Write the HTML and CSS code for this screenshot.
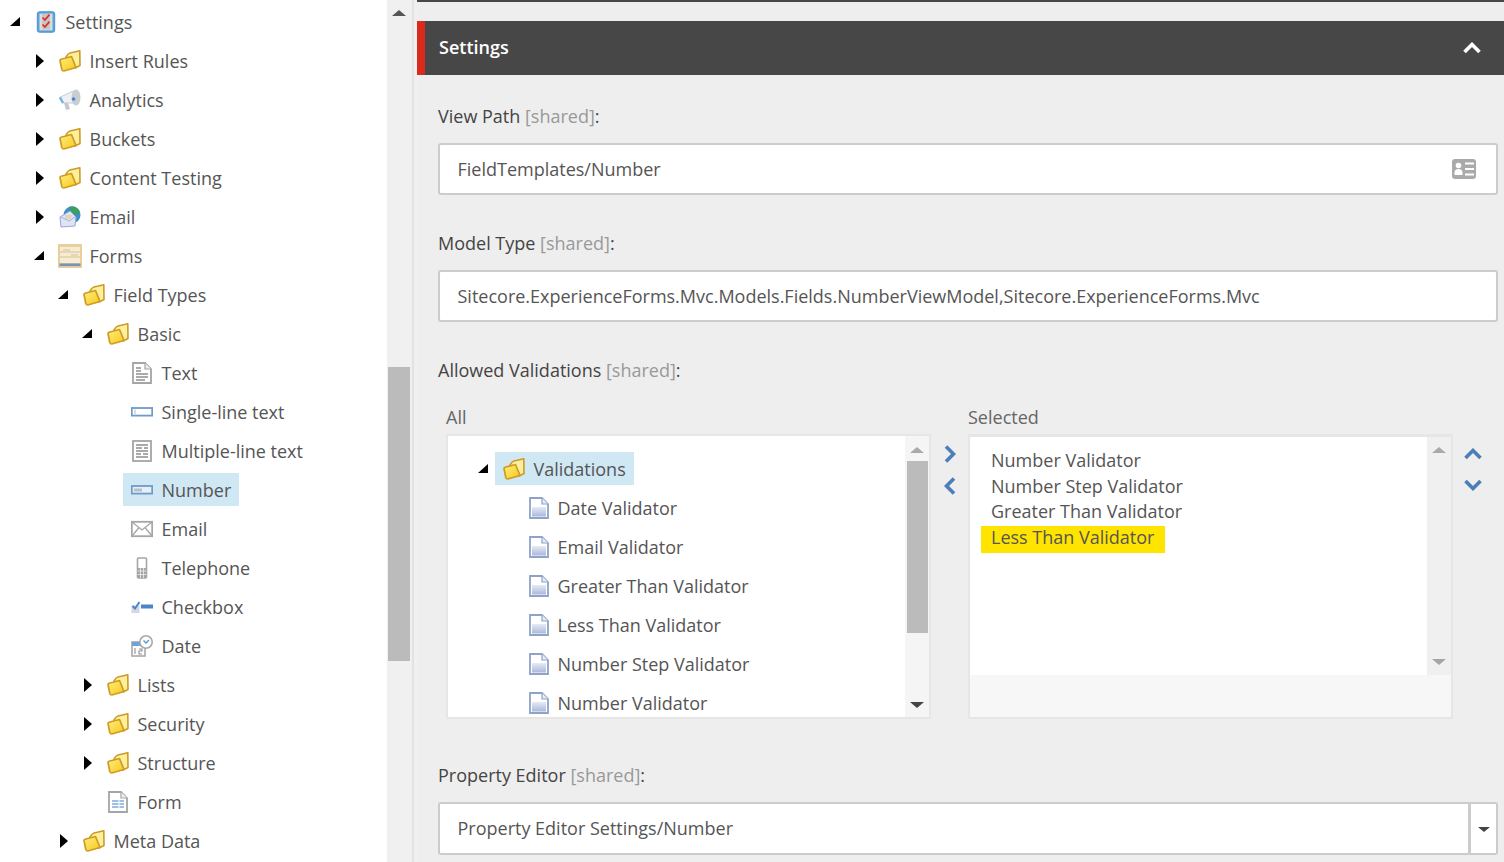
FILE: index.html
```html
<!DOCTYPE html>
<html lang="en">
<head>
<meta charset="utf-8">
<title>Settings</title>
<link rel="stylesheet" href="styles.css">
</head>
<body>
<svg class="defs" aria-hidden="true">
  <defs>
    <linearGradient id="fy" x1="0" y1="0" x2="1" y2="1"><stop offset="0" stop-color="#ffee80"/><stop offset="1" stop-color="#f6c81a"/></linearGradient>
    <linearGradient id="db" x1="0" y1="0" x2="0" y2="1"><stop offset="0" stop-color="#e6ebf5"/><stop offset="1" stop-color="#aab8dc"/></linearGradient>
    <symbol id="i-folder" viewBox="0 0 22 22">
      <path d="M7 7 Q9 3.5 11 3 L20.8 .8 L21 15.5 L16 18 Z" fill="#ffef9c" stroke="#cb9b28" stroke-width="1.6" stroke-linejoin="round"/>
      <path d="M1 10.5 Q1 9.6 2 9.3 L12.5 6.5 L17 17.5 L4.8 21 Q3.2 21 2.8 19.5 Z" fill="url(#fy)" stroke="#cf9c22" stroke-width="1.7" stroke-linejoin="round"/>
    </symbol>
    <symbol id="i-settings" viewBox="0 0 19 22">
      <rect x=".8" y=".8" width="17.4" height="20.4" rx="2" fill="#5aa3dc" stroke="#4b93d0" stroke-width="1"/>
      <rect x="3" y="2.6" width="13" height="16.8" fill="#dcdcdc"/>
      <rect x="5.5" y="3" width="8" height="15.5" fill="#c9c5c5"/>
      <path d="M6 6.5 L8.4 9 L13 3.6 M6 13.5 L8.4 16 L13 10.6" fill="none" stroke="#d5332a" stroke-width="1.8"/>
    </symbol>
    <symbol id="i-analytics" viewBox="0 0 22 22">
      <path d="M.5 8.5 L14 2 L17 14 L3.5 14 Z" fill="#eef0f3" stroke="#c5cbd3"/>
      <path d="M5 14 L7 21 L11 20 L9 14 Z" fill="#c2c7cd"/>
      <ellipse cx="17" cy="8.5" rx="4.5" ry="8" fill="#c9cdd2"/>
      <circle cx="14.5" cy="10" r="1.8" fill="#3f86d0"/>
      <path d="M1 8.5 L4 14" stroke="#6fb1e8" stroke-width="2.4"/>
    </symbol>
    <symbol id="i-emailglobe" viewBox="0 0 22 22">
      <circle cx="13" cy="9" r="8.5" fill="#3d8fc9"/>
      <path d="M10 .8 A8.5 8.5 0 0 1 21 6 L17 9 L12 5 Z" fill="#3aa05a"/>
      <path d="M1 11 L11 5 L17 11 L16 20 L2 21 Z" fill="#dfe4f5" stroke="#9aa6d8"/>
      <path d="M2 11 L10 15 L16 11" fill="none" stroke="#a8b2dc"/>
      <path d="M6 10 H13 M6.5 12 H12" stroke="#e3c777"/>
    </symbol>
    <symbol id="i-forms" viewBox="0 0 24 24">
      <rect width="24" height="24" fill="#e7cf9f"/>
      <rect x="2" y="3" width="20" height="16" fill="#f6ecd3"/>
      <path d="M2 8 H22 M2 13 H22 M5 6 H12 M13 11 H20" stroke="#d6c08f" stroke-width="1.2"/>
      <rect x="1.5" y="19.5" width="21" height="2.6" fill="#7793b5"/>
    </symbol>
    <symbol id="i-text" viewBox="0 0 20 22">
      <path d="M1 1 H13 L19 7 V21 H1 Z" fill="#fff" stroke="#a5a5a5" stroke-width="1.8"/>
      <path d="M13 1 V7 H19" fill="#eee" stroke="#a5a5a5" stroke-width="1.2"/>
      <path d="M4 6 H9 M4 9 H9 M4 12 H16 M4 15 H16 M4 18 H13" stroke="#8f8f8f" stroke-width="1.3"/>
    </symbol>
    <symbol id="i-single" viewBox="0 0 22 10">
      <rect x=".8" y="1" width="20.4" height="7.6" fill="#fff" stroke="#6f9bcb" stroke-width="1.8"/>
      <path d="M4 2.5 V7" stroke="#c6c6c6" stroke-width="1.2"/>
    </symbol>
    <symbol id="i-multi" viewBox="0 0 20 22">
      <rect x="1" y="1" width="18" height="20" fill="#fff" stroke="#a5a5a5" stroke-width="1.8"/>
      <path d="M4 5 H16 M4 8 H10 M12 8 H16 M4 11 H16 M4 14 H9 M11 14 H16 M4 17 H16" stroke="#8f8f8f" stroke-width="1.4"/>
    </symbol>
    <symbol id="i-number" viewBox="0 0 22 10">
      <rect x=".8" y="1" width="20.4" height="7.6" fill="#e7f0f8" stroke="#6f9bcb" stroke-width="1.8"/>
      <path d="M4 3.5 V6.5 M6 3.5 V6.5 M8 3.5 V6.5 M10 3.5 V6.5" stroke="#8e9aa8" stroke-width="1.1"/>
    </symbol>
    <symbol id="i-mail" viewBox="0 0 22 16">
      <rect x=".8" y=".8" width="20.4" height="14.4" fill="#fff" stroke="#a5a5a5" stroke-width="1.8"/>
      <path d="M1 1 L11 9 L21 1 M1 15 L8 6.5 M21 15 L14 6.5" fill="none" stroke="#a5a5a5" stroke-width="1.3"/>
    </symbol>
    <symbol id="i-phone" viewBox="0 0 12 22">
      <rect x="1.5" y="1" width="9" height="20" rx="1" fill="#fff" stroke="#a5a5a5" stroke-width="1.6"/>
      <rect x="1.5" y="11" width="9" height="10" fill="#a5a5a5"/>
      <path d="M4.5 11 V21 M7.5 11 V21 M1.5 14 H10.5 M1.5 17.5 H10.5" stroke="#eee" stroke-width=".8"/>
    </symbol>
    <symbol id="i-check" viewBox="0 0 22 13">
      <rect x=".5" y="5" width="8" height="7.5" fill="#d4d8de"/>
      <path d="M1.5 5.5 L4 8 L8.5 1.5" fill="none" stroke="#4a86c5" stroke-width="2"/>
      <rect x="10" y="4" width="12" height="4" fill="#4a86c5"/>
    </symbol>
    <symbol id="i-date" viewBox="0 0 22 22">
      <rect x="1" y="7" width="13" height="14" fill="#fff" stroke="#a8a8a8" stroke-width="1.6"/>
      <rect x="1" y="7" width="12" height="4" fill="#6ea3d8"/>
      <path d="M4 13 V19 M8 14 H11 V16 H8 V19 H11" fill="none" stroke="#909090" stroke-width="1.1"/>
      <circle cx="15" cy="7" r="6.2" fill="#fff" stroke="#a8a8a8" stroke-width="1.6"/>
      <path d="M12.5 5.5 L15 8 L18 5" fill="none" stroke="#5d9bd8" stroke-width="1.5"/>
    </symbol>
    <symbol id="i-form" viewBox="0 0 20 22">
      <path d="M1 1 H13 L19 7 V21 H1 Z" fill="#fff" stroke="#a5a5a5" stroke-width="1.8"/>
      <path d="M13 1 V7 H19" fill="#eef" stroke="#a5a5a5" stroke-width="1.2"/>
      <rect x="4" y="9" width="12" height="8" fill="#9fbfe5"/>
      <path d="M4 11.5 H16 M4 14.5 H16 M11 9 V17" stroke="#fff" stroke-width="1"/>
    </symbol>
    <symbol id="i-valid" viewBox="-1 0 20 22">
      <path d="M1 1 H13 L19 7 V21 H1 Z" fill="#fff" stroke="#8fa3c7" stroke-width="1.8"/>
      <path d="M13 1 V7 H19" fill="#e6ebf5" stroke="#8fa3c7" stroke-width="1.2"/>
      <rect x="3" y="10" width="14" height="9.5" fill="url(#db)"/>
    </symbol>
    <symbol id="t-closed" viewBox="0 0 8 14"><path d="M0 0 L8 7 L0 14 Z" fill="#000"/></symbol>
    <symbol id="t-open" viewBox="0 0 10 9"><path d="M10 0 V9 H0 Z" fill="#000"/></symbol>
    <symbol id="c-up" viewBox="0 0 18 12"><path d="M1.5 10 L9 2.5 L16.5 10" fill="none" stroke="currentColor" stroke-width="3.6"/></symbol>
    <symbol id="c-down" viewBox="0 0 18 12"><path d="M1.5 2 L9 9.5 L16.5 2" fill="none" stroke="currentColor" stroke-width="3.6"/></symbol>
    <symbol id="c-right" viewBox="0 0 12 18"><path d="M2 1.5 L9.5 9 L2 16.5" fill="none" stroke="currentColor" stroke-width="3.6"/></symbol>
    <symbol id="c-left" viewBox="0 0 12 18"><path d="M10 1.5 L2.5 9 L10 16.5" fill="none" stroke="currentColor" stroke-width="3.6"/></symbol>
  </defs>
</svg>

<div class="app">
  <aside class="side">
    <ul class="tree">
      <li><div class="row"><span class="tg open"><svg><use href="#t-open"/></svg></span><span class="node"><svg class="ic s-set"><use href="#i-settings"/></svg><span>Settings</span></span></div>
        <ul>
          <li><div class="row"><span class="tg closed"><svg><use href="#t-closed"/></svg></span><span class="node"><svg class="ic"><use href="#i-folder"/></svg><span>Insert Rules</span></span></div></li>
          <li><div class="row"><span class="tg closed"><svg><use href="#t-closed"/></svg></span><span class="node"><svg class="ic"><use href="#i-analytics"/></svg><span>Analytics</span></span></div></li>
          <li><div class="row"><span class="tg closed"><svg><use href="#t-closed"/></svg></span><span class="node"><svg class="ic"><use href="#i-folder"/></svg><span>Buckets</span></span></div></li>
          <li><div class="row"><span class="tg closed"><svg><use href="#t-closed"/></svg></span><span class="node"><svg class="ic"><use href="#i-folder"/></svg><span>Content Testing</span></span></div></li>
          <li><div class="row"><span class="tg closed"><svg><use href="#t-closed"/></svg></span><span class="node"><svg class="ic"><use href="#i-emailglobe"/></svg><span>Email</span></span></div></li>
          <li><div class="row"><span class="tg open"><svg><use href="#t-open"/></svg></span><span class="node"><svg class="ic big"><use href="#i-forms"/></svg><span>Forms</span></span></div>
            <ul>
              <li><div class="row"><span class="tg open"><svg><use href="#t-open"/></svg></span><span class="node"><svg class="ic"><use href="#i-folder"/></svg><span>Field Types</span></span></div>
                <ul>
                  <li><div class="row"><span class="tg open"><svg><use href="#t-open"/></svg></span><span class="node"><svg class="ic"><use href="#i-folder"/></svg><span>Basic</span></span></div>
                    <ul>
                      <li><div class="row"><span class="tg"></span><span class="node"><svg class="ic"><use href="#i-text"/></svg><span>Text</span></span></div></li>
                      <li><div class="row"><span class="tg"></span><span class="node"><svg class="ic"><use href="#i-single"/></svg><span>Single-line text</span></span></div></li>
                      <li><div class="row"><span class="tg"></span><span class="node"><svg class="ic"><use href="#i-multi"/></svg><span>Multiple-line text</span></span></div></li>
                      <li><div class="row"><span class="tg"></span><span class="node sel"><svg class="ic"><use href="#i-number"/></svg><span>Number</span></span></div></li>
                      <li><div class="row"><span class="tg"></span><span class="node"><svg class="ic"><use href="#i-mail"/></svg><span>Email</span></span></div></li>
                      <li><div class="row"><span class="tg"></span><span class="node"><svg class="ic"><use href="#i-phone"/></svg><span>Telephone</span></span></div></li>
                      <li><div class="row"><span class="tg"></span><span class="node"><svg class="ic"><use href="#i-check"/></svg><span>Checkbox</span></span></div></li>
                      <li><div class="row"><span class="tg"></span><span class="node"><svg class="ic"><use href="#i-date"/></svg><span>Date</span></span></div></li>
                    </ul>
                  </li>
                  <li><div class="row"><span class="tg closed"><svg><use href="#t-closed"/></svg></span><span class="node"><svg class="ic"><use href="#i-folder"/></svg><span>Lists</span></span></div></li>
                  <li><div class="row"><span class="tg closed"><svg><use href="#t-closed"/></svg></span><span class="node"><svg class="ic"><use href="#i-folder"/></svg><span>Security</span></span></div></li>
                  <li><div class="row"><span class="tg closed"><svg><use href="#t-closed"/></svg></span><span class="node"><svg class="ic"><use href="#i-folder"/></svg><span>Structure</span></span></div></li>
                  <li><div class="row"><span class="tg"></span><span class="node"><svg class="ic"><use href="#i-form"/></svg><span>Form</span></span></div></li>
                </ul>
              </li>
              <li><div class="row"><span class="tg closed"><svg><use href="#t-closed"/></svg></span><span class="node"><svg class="ic"><use href="#i-folder"/></svg><span>Meta Data</span></span></div></li>
            </ul>
          </li>
        </ul>
      </li>
    </ul>
  </aside>

  <div class="side-scroll">
    <span class="tri up dark top-arrow"></span>
    <div class="side-thumb"></div>
  </div>
  <div class="splitter"></div>

  <main class="main">
    <header class="head">
      <h1>Settings</h1>
      <svg class="head-chev"><use href="#c-up"/></svg>
    </header>

    <section class="fields">
      <label class="lbl">View Path <em>[shared]</em>:</label>
      <div class="field">
        <span>FieldTemplates/Number</span>
        <svg class="card" viewBox="0 0 24 20">
          <rect width="24" height="20" rx="3" fill="#aaa"/>
          <circle cx="6.5" cy="6.5" r="2.8" fill="#fff"/>
          <path d="M2.5 16 V13 Q3 10 6.5 10 Q10 10 10.5 13 V16 Z" fill="#fff"/>
          <path d="M13 4.5 H22 M13 10 H22 M13 15.5 H22" stroke="#fff" stroke-width="2"/>
        </svg>
      </div>

      <label class="lbl gap">Model Type <em>[shared]</em>:</label>
      <div class="field"><span>Sitecore.ExperienceForms.Mvc.Models.Fields.NumberViewModel,Sitecore.ExperienceForms.Mvc</span></div>

      <label class="lbl gap">Allowed Validations <em>[shared]</em>:</label>
      <div class="picker">
        <div class="col col-all">
          <div class="cap">All</div>
          <div class="pane">
            <div class="pane-body">
              <ul class="tree vtree">
                <li><div class="row"><span class="tg open"><svg><use href="#t-open"/></svg></span><span class="node sel"><svg class="ic"><use href="#i-folder"/></svg><span>Validations</span></span></div>
                  <ul>
                    <li><div class="row"><span class="tg"></span><span class="node"><svg class="ic"><use href="#i-valid"/></svg><span>Date Validator</span></span></div></li>
                    <li><div class="row"><span class="tg"></span><span class="node"><svg class="ic"><use href="#i-valid"/></svg><span>Email Validator</span></span></div></li>
                    <li><div class="row"><span class="tg"></span><span class="node"><svg class="ic"><use href="#i-valid"/></svg><span>Greater Than Validator</span></span></div></li>
                    <li><div class="row"><span class="tg"></span><span class="node"><svg class="ic"><use href="#i-valid"/></svg><span>Less Than Validator</span></span></div></li>
                    <li><div class="row"><span class="tg"></span><span class="node"><svg class="ic"><use href="#i-valid"/></svg><span>Number Step Validator</span></span></div></li>
                    <li><div class="row"><span class="tg"></span><span class="node"><svg class="ic"><use href="#i-valid"/></svg><span>Number Validator</span></span></div></li>
                  </ul>
                </li>
              </ul>
            </div>
            <div class="vbar">
              <span class="tri up mid"></span>
              <div class="vthumb"></div>
              <span class="tri down dark"></span>
            </div>
          </div>
        </div>

        <div class="movers">
          <svg class="chev-v"><use href="#c-right"/></svg>
          <svg class="chev-v"><use href="#c-left"/></svg>
        </div>

        <div class="col col-sel">
          <div class="cap">Selected</div>
          <div class="pane pane-sel">
            <div class="sel-top">
              <div class="sel-list">
                <div class="opt">Number Validator</div>
                <div class="opt">Number Step Validator</div>
                <div class="opt">Greater Than Validator</div>
                <div class="opt hit">Less Than Validator</div>
              </div>
              <div class="vbar vbar-sel">
                <span class="tri up mid"></span>
                <span class="tri down mid"></span>
              </div>
            </div>
            <div class="sel-foot"></div>
          </div>
        </div>

        <div class="sorters">
          <svg class="chev-h"><use href="#c-up"/></svg>
          <svg class="chev-h"><use href="#c-down"/></svg>
        </div>
      </div>

      <label class="lbl gap-lg">Property Editor <em>[shared]</em>:</label>
      <div class="combo">
        <div class="field combo-text"><span>Property Editor Settings/Number</span></div>
        <div class="combo-btn"><span class="tri down dark"></span></div>
      </div>
    </section>
  </main>
</div>
</body>
</html>
```

FILE: styles.css
```css
* { box-sizing: border-box; }
html, body { margin: 0; height: 862px; overflow: hidden; }
body { font-family: "Open Sans", sans-serif; font-size: 18px; color: #555; background: #fff; }
.defs { display: block; width: 0; height: 0; overflow: hidden; }
.app { display: flex; height: 862px; overflow: hidden; }

.side { width: 387px; flex: none; height: 862px; overflow: hidden; padding-top: 2px; background: #fff; }
.tree, .tree ul { list-style: none; margin: 0; padding: 0; }
.tree ul { padding-left: 24px; }
.row { display: flex; align-items: center; height: 39px; white-space: nowrap; }
.tg { width: 27px; flex: none; display: flex; align-items: center; }
.tg svg { display: block; }
.tg.open { padding-left: 10px; }
.tg.open svg { width: 10px; height: 9px; }
.tg.closed { padding-left: 12px; }
.tg.closed svg { width: 8px; height: 14px; }
.node { display: flex; align-items: center; height: 33px; padding: 0 8px; gap: 8.5px; }
.node.sel { background: #cfe8f4; }
.ic { width: 22px; height: 22px; flex: none; display: block; }
.ic.big { width: 24px; height: 24px; margin: 0 -1px 0 -1px; }

.tri { display: block; width: 0; height: 0; border-left: 7px solid transparent; border-right: 7px solid transparent; }
.tri.up { border-bottom: 6px solid #999; }
.tri.down { border-top: 6px solid #999; }
.tri.up.dark { border-bottom-color: #555; }
.tri.down.dark { border-top-color: #444; }
.tri.up.mid { border-bottom-color: #aaa; }
.tri.down.mid { border-top-color: #a5a5a5; }

.side-scroll { width: 25px; flex: none; background: #f0f0f0; display: flex; flex-direction: column; align-items: center; padding-right: 1px; }
.top-arrow { margin-top: 10px; }
.side-thumb { width: 22px; height: 294px; margin-top: 351px; background: #bbb; }
.splitter { width: 5px; flex: none; background: #f0f0f0; border-left: 2px solid #e2e2e2; }

.main { flex: 1; min-width: 0; height: 862px; background: #eee; border-top: 2px solid #474747; }
.head { display: flex; align-items: center; justify-content: space-between; height: 54px; margin-top: 19px; padding: 0 23px 2px 14px; background: #474747; border-left: 8px solid #dc291e; }
.head h1 { margin: 0; font-size: 18px; font-weight: 600; color: #fff; }
.head-chev { width: 18px; height: 12px; color: #fff; display: block; margin-top: 2px; }

.fields { padding: 28px 6px 0 21px; }
.lbl { display: block; height: 26px; line-height: 26px; margin-bottom: 14px; color: #444; }
.lbl em { font-style: normal; color: #999; }
.gap { margin-top: 35px; }
.gap-lg { margin-top: 43px; }
.field { display: flex; align-items: center; justify-content: space-between; height: 52px; padding: 0 20px 0 17.5px; background: #fff; border: 2px solid #ccc; border-radius: 3px; white-space: nowrap; }
.card { width: 24px; height: 20px; display: block; }

.picker { display: flex; align-items: flex-start; margin-top: 21px; }
.col { flex: none; }
.col-all { width: 493px; padding-left: 8px; }
.col-sel { width: 485px; }
.cap { height: 26px; line-height: 26px; margin-bottom: 4px; color: #666; }
.pane { height: 285px; border: 2px solid #e6e6e6; background: #fff; display: flex; overflow: hidden; }
.pane-body { flex: 1; min-width: 0; overflow: hidden; padding: 13px 0 0 20px; }
.vbar { width: 24px; flex: none; background: #f5f5f5; display: flex; flex-direction: column; align-items: center; padding: 11px 0 9px; }
.vthumb { width: 21px; height: 172px; margin: 8px 0 auto; background: #bbb; }
.movers { width: 37px; flex: none; display: flex; flex-direction: column; align-items: center; gap: 14px; padding: 41px 0 0 1px; }
.chev-v { width: 12px; height: 18px; display: block; color: #4a7fba; }
.sorters { width: 39px; flex: none; display: flex; flex-direction: column; align-items: center; gap: 19px; padding-top: 44px; }
.chev-h { width: 18px; height: 12px; display: block; color: #4a7fba; }

.pane-sel { flex-direction: column; background: #f7f7f7; border-top-width: 3px; }
.sel-top { height: 238px; flex: none; display: flex; background: #fff; }
.sel-list { flex: 1; min-width: 0; padding: 11px 0 0 11px; }
.opt { height: 25.6px; line-height: 25.6px; padding-left: 10px; white-space: nowrap; }
.opt.hit { display: inline-block; height: 27px; line-height: 22px; margin-top: 1px; background: #ffe400; padding-right: 11px; width: 184px; }
.vbar-sel { width: 24px; background: #f0f0f0; justify-content: space-between; padding: 10px 0 10px; }
.sel-foot { flex: 1; }

.combo { display: flex; height: 53px; }
.combo-text { flex: 1; min-width: 0; border-radius: 3px 0 0 3px; height: 53px; border-right-width: 3px; padding-bottom: 1px; }
.combo-btn { width: 27px; flex: none; background: #fff; border: 2px solid #ccc; border-left: 0; border-radius: 0 3px 3px 0; display: flex; align-items: center; justify-content: center; padding-left: 1px; }
.combo-btn .tri { border-left-width: 6px; border-right-width: 6px; border-top-width: 5px; margin-top: 2px; }
```
